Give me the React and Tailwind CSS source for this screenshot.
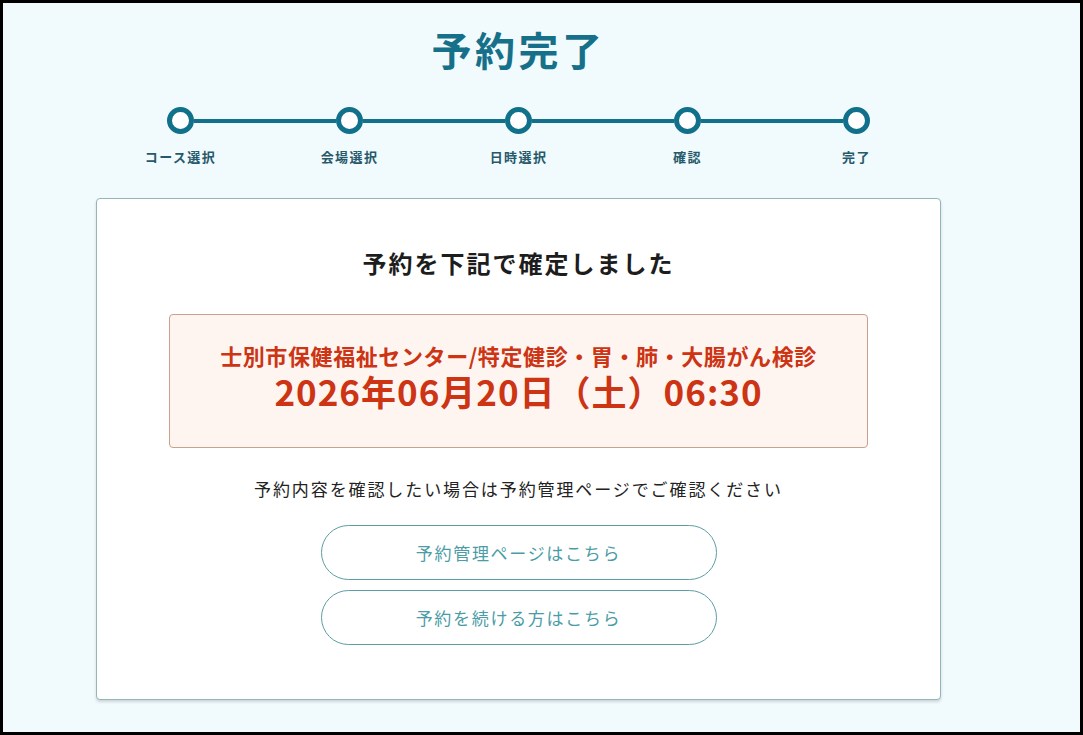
const FONT = { fontFamily: '"Noto Sans CJK JP", "Noto Sans", sans-serif' };

const STEPS = ["コース選択", "会場選択", "日時選択", "確認", "完了"];

export default function App() {
  return (
    <div
      className="box-border h-[735px] w-[1083px] overflow-hidden border-[3px] border-black bg-[#f1fafd]"
      style={FONT}
    >
      <div className="ml-[93px] w-[845px]">
        <h1 className="mt-[26px] text-center text-[40px] font-bold leading-[40px] tracking-[3.5px] text-[#17708a]">
          予約完了
        </h1>

        <div className="mt-[38px] grid grid-cols-5">
          {STEPS.map((label, i) => (
            <Step key={label} label={label} first={i === 0} last={i === STEPS.length - 1} />
          ))}
        </div>

        <div className="mt-[32px] rounded-[4px] border border-[#93b6bb] bg-white pb-[54px] pt-[46px] shadow-[0_2px_3px_rgba(0,0,0,0.15)]">
          <h2 className="text-center text-[24px] font-bold leading-[36px] tracking-[2px] text-[#1d1d1d]">
            予約を下記で確定しました
          </h2>

          <div className="mx-[72px] mt-[33px] flex h-[134px] flex-col items-center rounded-[4px] border border-[#c9a18c] bg-[#fef5f1] pt-[26px] text-[#cc3414]">
            <p className="text-[22px] font-bold leading-[28px] tracking-[0.6px]">
              士別市保健福祉センター/特定健診・胃・肺・大腸がん検診
            </p>
            <p className="mt-[2px] text-[35px] font-bold leading-[40px] tracking-[1px]">
              2026年06月20日（土）06:30
            </p>
          </div>

          <p className="mt-[28px] text-center text-[17px] leading-[26px] tracking-[1.9px] text-[#222]">
            予約内容を確認したい場合は予約管理ページでご確認ください
          </p>

          <div className="mt-[23px] flex flex-col items-center gap-[10px]">
            <Pill>予約管理ページはこちら</Pill>
            <Pill>予約を続ける方はこちら</Pill>
          </div>
        </div>
      </div>
    </div>
  );
}

function Step({ label, first, last }) {
  return (
    <div className="flex flex-col items-center">
      <div className="flex w-full items-center">
        <div className={`h-[4px] flex-1 ${first ? "bg-transparent" : "bg-[#11708a]"}`} />
        <div className="box-border h-[27px] w-[27px] rounded-full border-[5px] border-[#11708a] bg-white" />
        <div className={`h-[4px] flex-1 ${last ? "bg-transparent" : "bg-[#11708a]"}`} />
      </div>
      <span className="mt-[14px] text-[13px] font-bold leading-[18px] tracking-[1.4px] text-[#27596a]">
        {label}
      </span>
    </div>
  );
}

function Pill({ children }) {
  return (
    <button className="flex h-[55px] w-[396px] items-center justify-center rounded-full border border-[#5b9ea5] bg-white text-[17px] leading-none tracking-[1.7px] text-[#4b9ca6]">
      {children}
    </button>
  );
}
